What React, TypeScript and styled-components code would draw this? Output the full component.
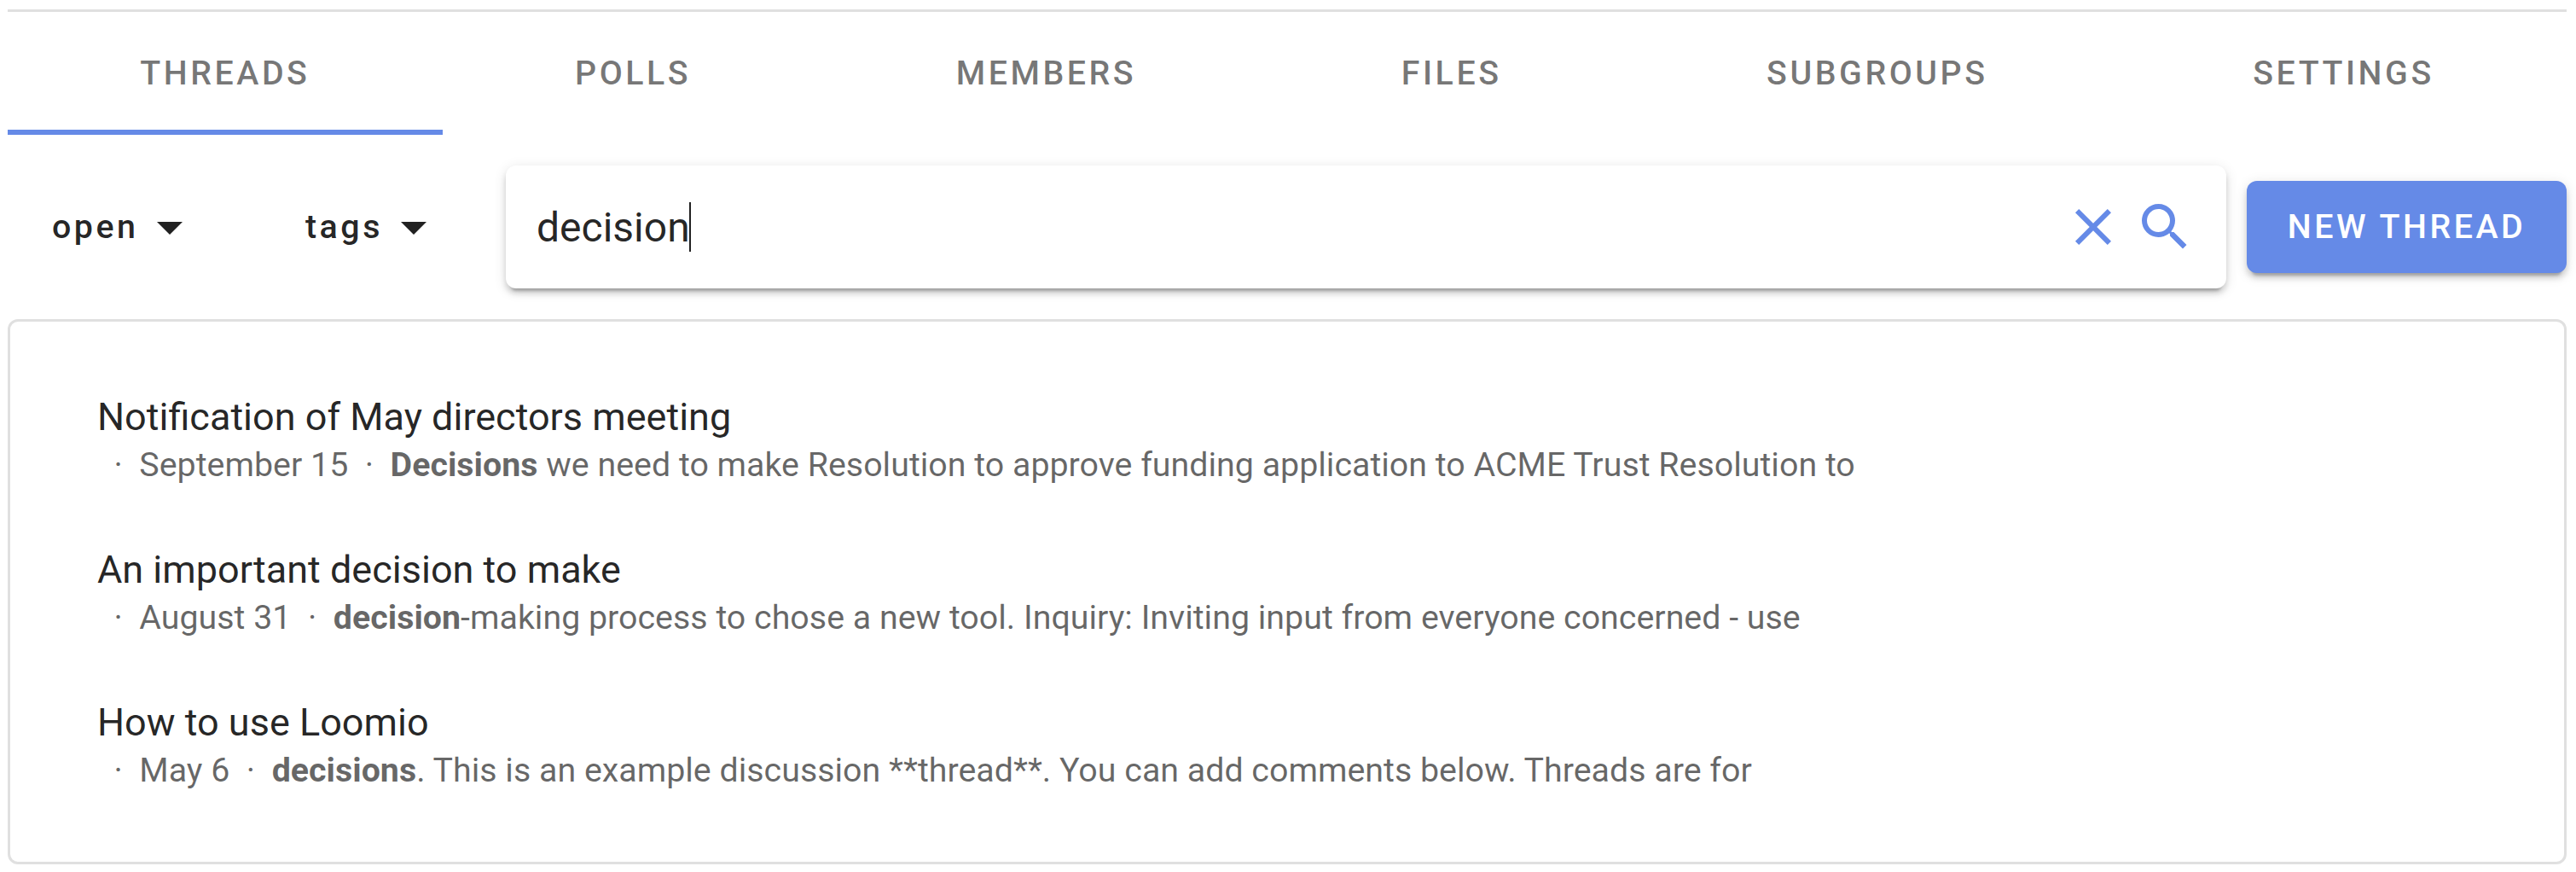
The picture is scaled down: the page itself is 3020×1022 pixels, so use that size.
import React from "react";
import styled, { createGlobalStyle } from "styled-components";

const GlobalStyle = createGlobalStyle`
  *, *::before, *::after { box-sizing: border-box; }
  body {
    margin: 0;
    background: #fff;
    color: rgba(0, 0, 0, 0.87);
    font-family: Roboto, "Liberation Sans", sans-serif;
  }
`;

const accent = "#658ae7";
const elevation =
  "0 9px 3px -6px rgba(0,0,0,.2), 0 6px 6px 0 rgba(0,0,0,.14), 0 3px 15px 0 rgba(0,0,0,.12)";

const Page = styled.main`
  width: 3020px;
  height: 1022px;
  padding: 11px 11px 9px 9px;
  overflow: hidden;
`;

const TabBar = styled.nav`
  display: flex;
  height: 147px;
  border-top: 3px solid #e0e0e0;
`;

const Tab = styled.a<{ $active?: boolean }>`
  display: flex;
  flex: 1 1 auto;
  align-items: center;
  justify-content: center;
  min-width: 270px;
  padding: 5px 48px 0;
  border-bottom: 6px solid ${(p) => (p.$active ? accent : "transparent")};
  color: rgba(0, 0, 0, 0.54);
  font-size: 39.375px;
  font-weight: 500;
  letter-spacing: 0.0892857em;
  line-height: 47px;
  white-space: nowrap;
`;

const Toolbar = styled.div`
  display: flex;
  align-items: center;
  height: 144px;
  margin: 36px 0;
`;

const FilterButton = styled.button<{ $width: number }>`
  display: flex;
  flex: none;
  align-items: center;
  width: ${(p) => p.$width}px;
  height: 108px;
  padding: 0 0 0 52px;
  border: 0;
  background: none;
  color: rgba(0, 0, 0, 0.87);
  font: 500 39.375px/48px Roboto, sans-serif;
  letter-spacing: 0.0892857em;
`;

const FilterLabel = styled.span`
  padding-bottom: 1px;
  line-height: 47px;
`;

const SearchField = styled.div`
  display: flex;
  flex: 1;
  align-items: center;
  gap: 12px;
  height: 144px;
  margin-right: 24px;
  padding: 0 36px;
  border-radius: 12px;
  background: #fff;
  box-shadow: ${elevation};
`;

const Query = styled.span`
  display: flex;
  flex: 1;
  align-items: center;
  padding-top: 1px;
  font-size: 48px;
  line-height: 57px;
`;

const Caret = styled.i`
  width: 2px;
  height: 58px;
  margin: -1px 0 0 -1px;
  background: rgba(0, 0, 0, 0.87);
`;

const Icon = styled.svg`
  flex: none;
  width: 72px;
  height: 72px;
  fill: currentColor;
`;

const FieldIcon = styled(Icon)`
  color: ${accent};
`;

const PrimaryButton = styled.button`
  flex: none;
  width: 375px;
  height: 108px;
  padding: 0 0 1px;
  border: 0;
  border-radius: 12px;
  background: ${accent};
  box-shadow: ${elevation};
  color: #fff;
  font: 500 39.375px/47px Roboto, sans-serif;
  letter-spacing: 0.0892857em;
`;

const Results = styled.section`
  height: 639px;
  padding: 72px 102px;
  border: 3px solid #e0e0e0;
  border-radius: 12px;
`;

const Result = styled.article`
  height: 179px;
  padding-top: 11px;
`;

const Title = styled.h2`
  margin: 0;
  font-size: 45px;
  font-weight: 400;
  line-height: 57px;
`;

const Excerpt = styled.p`
  margin: 0;
  color: rgba(0, 0, 0, 0.6);
  font-size: 39.375px;
  line-height: 55px;
  white-space: pre;

  b { font-weight: 700; }
`;

const tabs = ["THREADS", "POLLS", "MEMBERS", "FILES", "SUBGROUPS", "SETTINGS"];

const results = [
  {
    title: "Notification of May directors meeting",
    date: "September 15",
    match: "Decisions",
    rest: " we need to make Resolution to approve funding application to ACME Trust Resolution to",
  },
  {
    title: "An important decision to make",
    date: "August 31",
    match: "decision",
    rest: "-making process to chose a new tool. Inquiry: Inviting input from everyone concerned - use",
  },
  {
    title: "How to use Loomio",
    date: "May 6",
    match: "decisions",
    rest: ". This is an example discussion **thread**. You can add comments below. Threads are for",
  },
];

const MenuDown = () => (
  <Icon viewBox="0 0 24 24">
    <path d="M7,10L12,15L17,10H7Z" />
  </Icon>
);

export default function App() {
  return (
    <Page>
      <GlobalStyle />
      <TabBar>
        {tabs.map((t, i) => (
          <Tab key={t} $active={i === 0}>
            {t}
          </Tab>
        ))}
      </TabBar>
      <Toolbar>
        <FilterButton $width={297}>
          <FilterLabel>open</FilterLabel>
          <MenuDown />
        </FilterButton>
        <FilterButton $width={287}>
          <FilterLabel>tags</FilterLabel>
          <MenuDown />
        </FilterButton>
        <SearchField>
          <Query>
            decision
            <Caret />
          </Query>
          <FieldIcon viewBox="0 0 24 24">
            <path d="M19,6.41L17.59,5L12,10.59L6.41,5L5,6.41L10.59,12L5,17.59L6.41,19L12,13.41L17.59,19L19,17.59L13.41,12L19,6.41Z" />
          </FieldIcon>
          <FieldIcon viewBox="0 0 24 24">
            <path d="M9.5,3A6.5,6.5 0 0,1 16,9.5C16,11.11 15.41,12.59 14.44,13.73L14.71,14H15.5L20.5,19L19,20.5L14,15.5V14.71L13.73,14.44C12.59,15.41 11.11,16 9.5,16A6.5,6.5 0 0,1 3,9.5A6.5,6.5 0 0,1 9.5,3M9.5,5C7,5 5,7 5,9.5C5,12 7,14 9.5,14C12,14 14,12 14,9.5C14,7 12,5 9.5,5Z" />
          </FieldIcon>
        </SearchField>
        <PrimaryButton>NEW THREAD</PrimaryButton>
      </Toolbar>
      <Results>
        {results.map((r) => (
          <Result key={r.title}>
            <Title>{r.title}</Title>
            <Excerpt>
              {"\u00a0 · \u00a0" + r.date + "\u00a0 · \u00a0"}
              <b>{r.match}</b>
              {r.rest}
            </Excerpt>
          </Result>
        ))}
      </Results>
    </Page>
  );
}
